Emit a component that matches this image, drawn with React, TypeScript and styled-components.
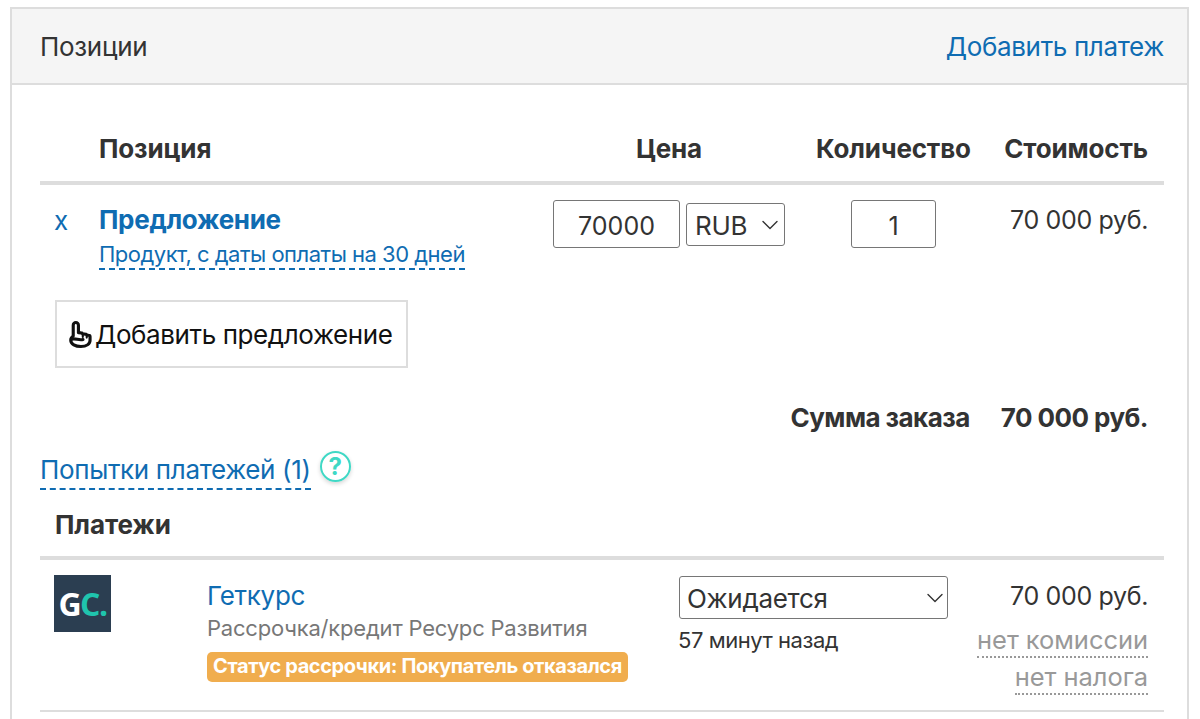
import React from 'react';
import styled, { createGlobalStyle } from 'styled-components';
import { ChevronDown } from 'lucide-react';

const Global = createGlobalStyle`
  html, body { margin: 0; padding: 0; height: 719px; overflow: hidden; background: #fff; }
  body { font-family: Inter, "Noto Sans", sans-serif; color: #333; }
  * { box-sizing: border-box; }
`;

const Page = styled.div`
  padding: 7px 11px 0 10px;
`;

const Panel = styled.section`
  border: 2px solid #ddd;
  border-bottom: 0;
  height: 720px;
`;

const PanelHeader = styled.header`
  height: 76px;
  padding: 0 23px 0 28px;
  background: #f5f5f5;
  border-bottom: 2px solid #ddd;
  display: flex;
  align-items: center;
  justify-content: space-between;
  font-size: 26px;
  letter-spacing: -0.3px;
`;

const Link = styled.a`
  color: #0f6cb2;
  font-size: 26px;
  letter-spacing: -0.35px;
`;

const PanelBody = styled.div`
  padding: 0 23px 0 28px;
`;

const Row = styled.div`
  display: grid;
  grid-template-columns: 59px 454px 232px 185px 1fr;
`;

const HeadRow = styled(Row)`
  height: 100px;
  padding-bottom: 17px;
  align-items: end;
  border-bottom: 4px solid #ddd;
  font-size: 26px;
  font-weight: 700;
  letter-spacing: -0.15px;
`;

const HeadCell = styled.div<{ $align?: string; $shift?: number }>`
  text-align: ${({ $align }) => $align || 'left'};
  padding-left: ${({ $shift }) => $shift || 0}px;
  padding-right: ${({ $align }) => ($align === 'right' ? 16 : 0)}px;
  white-space: nowrap;
`;

const ItemRow = styled(Row)`
  padding-top: 15px;
  height: 115px;
`;

const Remove = styled.a`
  padding: 5px 0 0 14px;
  color: #0f6cb2;
  font-size: 26px;
  line-height: 32px;
`;

const OfferName = styled.a`
  display: block;
  margin-top: 4px;
  color: #0f6cb2;
  font-size: 26px;
  font-weight: 700;
  letter-spacing: -0.3px;
  line-height: 32px;
`;

const OfferNote = styled.a`
  display: inline-block;
  margin-top: 4px;
  color: #0f6cb2;
  font-size: 22px;
  letter-spacing: -0.5px;
  line-height: 28px;
  border-bottom: 2px dashed #0f6cb2;
`;

const PriceGroup = styled.div`
  display: flex;
  gap: 6px;
  align-items: flex-start;
`;

const NumberInput = styled.input<{ $width: number }>`
  width: ${({ $width }) => $width}px;
  height: 48px;
  padding: 3px 0 0;
  border: 1px solid #767676;
  border-radius: 3px;
  background: #fff;
  color: #333;
  text-align: center;
  font: 400 25px Inter, sans-serif;
  outline: none;
`;

const SelectBox = styled.div<{ $width: number; $height: number; $right: number }>`
  position: relative;
  width: ${({ $width }) => $width}px;
  height: ${({ $height }) => $height}px;
  svg {
    position: absolute;
    right: ${({ $right }) => $right}px;
    top: 50%;
    transform: translateY(-50%);
    pointer-events: none;
    color: #333;
  }
`;

const Select = styled.select<{ $pad: number }>`
  appearance: none;
  width: 100%;
  height: 100%;
  padding: 2px 0 0 ${({ $pad }) => $pad}px;
  border: 1px solid #767676;
  border-radius: 3px;
  background: #fff;
  color: #333;
  font: 400 26px Inter, sans-serif;
  letter-spacing: -0.3px;
  outline: none;
`;

const RubSelect = styled(SelectBox)`
  margin-top: 3px;
`;

const QtyCell = styled.div`
  padding-left: 66px;
`;

const Amount = styled.div`
  padding: 5px 16px 0 0;
  text-align: right;
  font-size: 25px;
  letter-spacing: -0.35px;
  white-space: nowrap;
`;

const AddOfferButton = styled.button`
  display: flex;
  align-items: center;
  gap: 3px;
  width: 353px;
  height: 68px;
  margin-left: 15px;
  padding: 0 0 0 12px;
  border: 2px solid #ddd;
  background: #fff;
  color: #111;
  font: 400 26px Inter, sans-serif;
  letter-spacing: -0.4px;
`;

const HandIcon = () => (
  <svg width="23" height="27" viewBox="0 0 22 26" fill="none" stroke="#111" strokeWidth="3" strokeLinecap="round" strokeLinejoin="round">
    <path d="M4 14.5V4a2.5 2.5 0 0 1 5 0v7.2l2.6.2c.8 0 1.3.5 1.5 1.1l2.6.1c.7 0 1.2.4 1.4 1l1.8.1c.8 0 1.3.6 1.3 1.4v3.4c0 3.8-3.6 6-8.8 6S1.6 22.3 1.6 18.5c0-1.8.9-3 2.4-4Z" />
    <path d="M2.4 17.6c3.5-1.5 7 1.5 11 .2" />
    <path d="M13.2 12.8v2.6M17 13.6v2.4" strokeWidth="2" />
  </svg>
);

const SumRow = styled.div`
  display: flex;
  justify-content: flex-end;
  gap: 31px;
  height: 37px;
  margin-top: 31px;
  padding-right: 16px;
  align-items: center;
  font-size: 26px;
  font-weight: 700;
  letter-spacing: -0.55px;
`;

const AttemptsRow = styled.div`
  display: flex;
  align-items: flex-start;
  gap: 9px;
  margin-top: 15px;
`;

const Attempts = styled(Link)`
  display: block;
  height: 39px;
  line-height: 38px;
  border-bottom: 2px dashed #0f6cb2;
`;

const Help = styled.span`
  width: 31px;
  height: 31px;
  border: 2px solid #3fd8c5;
  border-radius: 50%;
  display: flex;
  align-items: center;
  justify-content: center;
  color: #3fd8c5;
  font-size: 24px;
  font-weight: 700;
  box-shadow: 0 2px 4px rgba(0, 0, 0, 0.16);
`;

const PaymentsTitle = styled.div`
  height: 70px;
  padding: 19px 0 0 15px;
  border-bottom: 4px solid #ddd;
  font-size: 26px;
  font-weight: 700;
  letter-spacing: -0.1px;
`;

const PaymentRow = styled.div`
  display: grid;
  grid-template-columns: 167px 471px 270px 1fr;
  height: 152px;
  padding-top: 15px;
  border-bottom: 2px solid #ddd;
`;

const LogoCell = styled.div`
  padding-left: 14px;
`;

const Logo = styled.div`
  width: 57px;
  height: 57px;
  padding-bottom: 1px;
  background: #2b3e51;
  display: flex;
  align-items: center;
  justify-content: center;
  font: 700 32px "Open Sans", sans-serif;
  color: #fff;
  letter-spacing: -1.5px;
`;

const LogoAccent = styled.span`
  color: #1fc4ad;
`;

const ProviderName = styled.a`
  display: block;
  margin-top: 3px;
  color: #0f6cb2;
  font-size: 26px;
  letter-spacing: -0.3px;
  line-height: 36px;
`;

const ProviderNote = styled.div`
  color: #777;
  font-size: 22px;
  line-height: 29px;
  letter-spacing: -0.2px;
`;

const StatusBadge = styled.div`
  display: inline-block;
  height: 30px;
  margin-top: 9px;
  padding: 0 6px;
  border-radius: 5px;
  background: #f0ad4e;
  color: #fff;
  font-size: 20px;
  font-weight: 700;
  letter-spacing: -0.4px;
  line-height: 29px;
  white-space: nowrap;
`;

const StatusCell = styled.div`
  padding: 1px 0 0 1px;
`;

const TimeAgo = styled.div`
  margin: 7px 0 0 -1px;
  font-size: 22px;
  line-height: 29px;
  letter-spacing: -0.45px;
`;

const Money = styled.div`
  display: flex;
  flex-direction: column;
  align-items: flex-end;
  padding-right: 16px;
`;

const MoneyValue = styled.div`
  margin: 1px 0 5px;
  font-size: 25px;
  line-height: 40px;
  letter-spacing: -0.35px;
  white-space: nowrap;
`;

const Fee = styled.div`
  color: #999;
  font-size: 25.5px;
  letter-spacing: -0.05px;
  line-height: 32px;
  margin-top: 3px;
  height: 34px;
  border-bottom: 2px dotted #999;
  white-space: nowrap;
`;

const App = () => (
  <Page>
    <Global />
    <Panel>
      <PanelHeader>
        <span>Позиции</span>
        <Link>Добавить платеж</Link>
      </PanelHeader>
      <PanelBody>
        <HeadRow>
          <div />
          <HeadCell>Позиция</HeadCell>
          <HeadCell $align="center">Цена</HeadCell>
          <HeadCell $align="center" $shift={31}>Количество</HeadCell>
          <HeadCell $align="right">Стоимость</HeadCell>
        </HeadRow>
        <ItemRow>
          <Remove>x</Remove>
          <div>
            <OfferName>Предложение</OfferName>
            <OfferNote>Продукт, с даты оплаты на 30 дней</OfferNote>
          </div>
          <PriceGroup>
            <NumberInput $width={127} defaultValue="70000" />
            <RubSelect $width={99} $height={43} $right={1}>
              <Select $pad={8} defaultValue="RUB">
                <option>RUB</option>
              </Select>
              <ChevronDown size={28} strokeWidth={1.2} />
            </RubSelect>
          </PriceGroup>
          <QtyCell>
            <NumberInput $width={85} defaultValue="1" />
          </QtyCell>
          <Amount>70 000 руб.</Amount>
        </ItemRow>
        <AddOfferButton>
          <HandIcon />
          Добавить предложение
        </AddOfferButton>
        <SumRow>
          <span>Сумма заказа</span>
          <span>70 000 руб.</span>
        </SumRow>
        <AttemptsRow>
          <Attempts>Попытки платежей (1)</Attempts>
          <Help>?</Help>
        </AttemptsRow>
        <PaymentsTitle>Платежи</PaymentsTitle>
        <PaymentRow>
          <LogoCell>
            <Logo>
              G<LogoAccent>C.</LogoAccent>
            </Logo>
          </LogoCell>
          <div>
            <ProviderName>Геткурс</ProviderName>
            <ProviderNote>Рассрочка/кредит Ресурс Развития</ProviderNote>
            <StatusBadge>Статус рассрочки: Покупатель отказался</StatusBadge>
          </div>
          <StatusCell>
            <SelectBox $width={269} $height={43} $right={-1}>
              <Select $pad={7} defaultValue="Ожидается">
                <option>Ожидается</option>
              </Select>
              <ChevronDown size={28} strokeWidth={1.2} />
            </SelectBox>
            <TimeAgo>57 минут назад</TimeAgo>
          </StatusCell>
          <Money>
            <MoneyValue>70 000 руб.</MoneyValue>
            <Fee>нет комиссии</Fee>
            <Fee>нет налога</Fee>
          </Money>
        </PaymentRow>
      </PanelBody>
    </Panel>
  </Page>
);

export default App;
